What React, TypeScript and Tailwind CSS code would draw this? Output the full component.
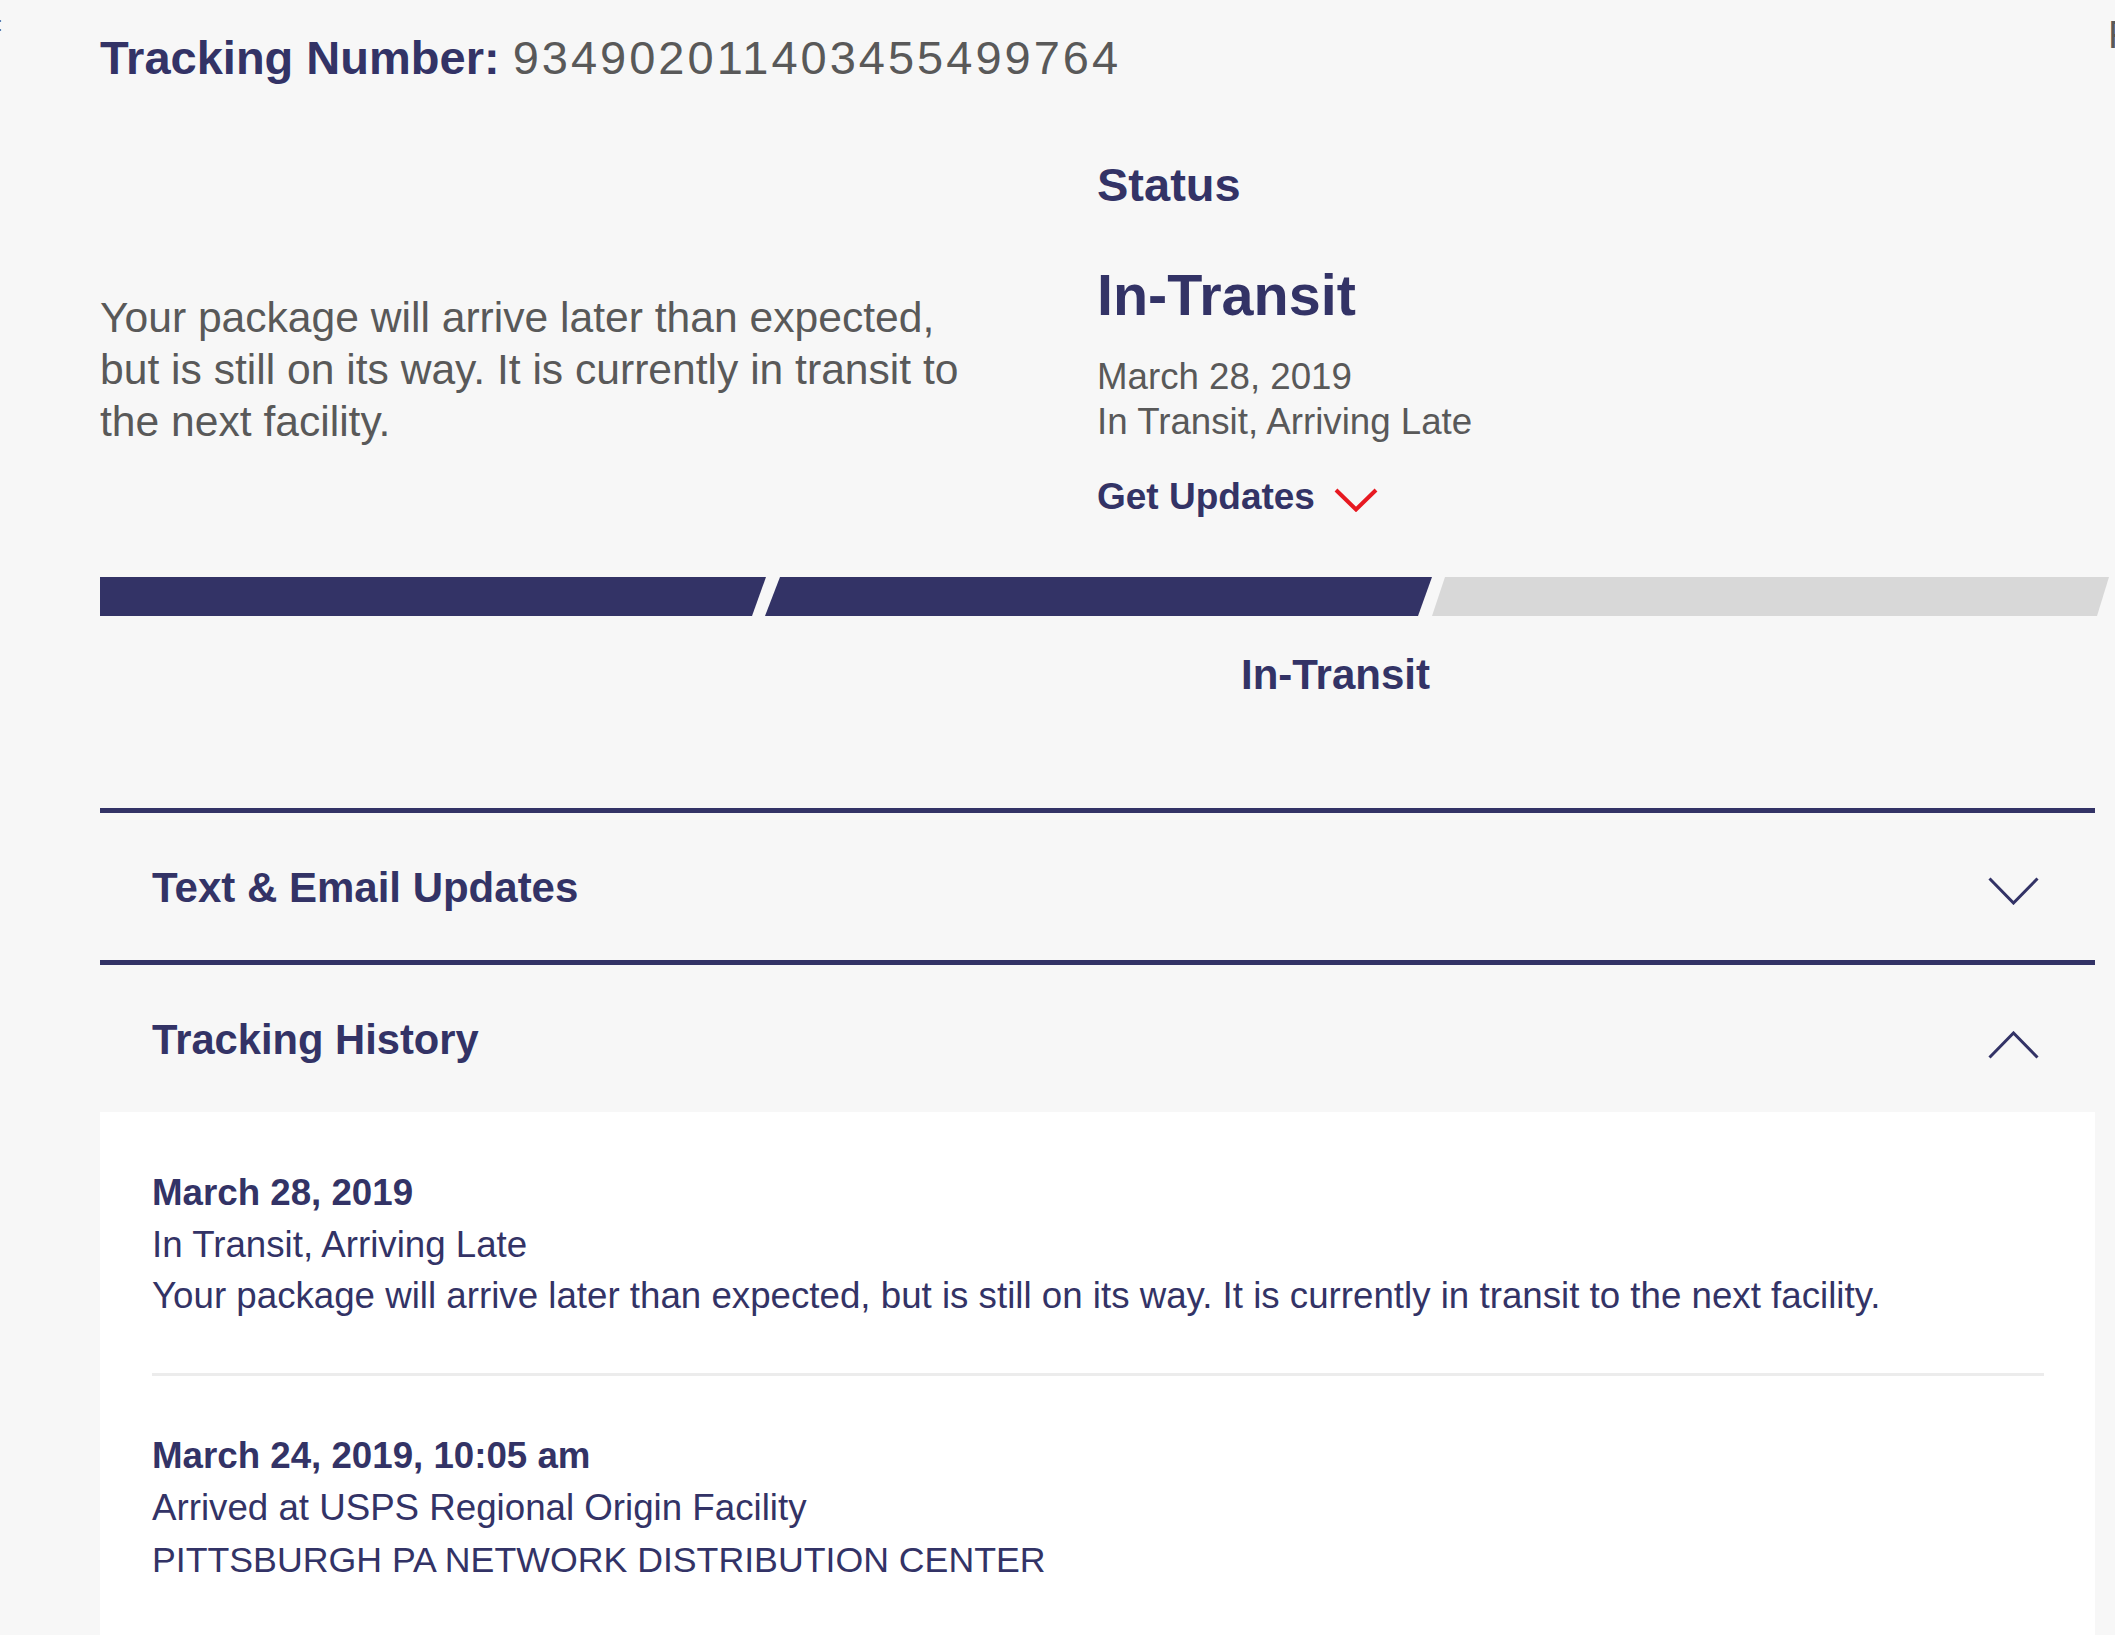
import React from "react";

function ChevronDown() {
  return (
    <svg width="51" height="28" viewBox="0 0 51 28" fill="none" className="mt-[9px] shrink-0">
      <polyline points="1.5,1.5 25.5,26 49.5,1.5" stroke="#333366" strokeWidth="3" strokeLinejoin="miter" />
    </svg>
  );
}

function ChevronUp() {
  return (
    <svg width="51" height="28" viewBox="0 0 51 28" fill="none" className="mt-[13px] shrink-0">
      <polyline points="1.5,26.5 25.5,2 49.5,26.5" stroke="#333366" strokeWidth="3" strokeLinejoin="miter" />
    </svg>
  );
}

export default function App() {
  return (
    <div className="relative min-h-[1635px] w-[2115px] overflow-hidden bg-[#f7f7f7] font-['Liberation_Sans',Arial,sans-serif]">
      <span className="absolute left-[-3px] top-[12px] text-[20px] leading-[24px] text-[#595959]">:</span>
      <span className="absolute left-[2108px] top-[13px] text-[39px] leading-[44px] text-[#595959]">F</span>

      <div className="pl-[100px]">
        <h1 className="pt-[30px] text-[47px] leading-[56px]">
          <span className="font-bold text-[#333366]">Tracking Number:</span>{" "}
          <span className="tracking-[3px] text-[#595959]">934902011403455499764</span>
        </h1>

        <div className="mt-[71px] flex items-start">
          <div className="w-[997px] shrink-0">
            <p className="mt-[134px] w-[880px] text-[42.6px] leading-[52px] text-[#595959]">
              Your package will arrive later than expected, but is still on its way. It is currently in transit to the next facility.
            </p>
          </div>
          <div className="flex flex-col">
            <p className="text-[47px] font-bold leading-[56px] text-[#333366]">Status</p>
            <p className="mt-[50px] text-[57.5px] font-bold leading-[64px] text-[#333366]">In-Transit</p>
            <div className="mt-[27px] text-[36.7px] leading-[45px] text-[#595959]">
              <p>March 28, 2019</p>
              <p>In Transit, Arriving Late</p>
            </div>
            <div className="mt-[30px] flex items-start">
              <span className="text-[37px] font-bold leading-[45px] text-[#333366]">Get Updates</span>
              <svg width="44" height="24" viewBox="0 0 44 24" fill="none" className="ml-[19px] mt-[14px]">
                <polyline points="2,2 22,21.5 42,2" stroke="#e71921" strokeWidth="4" />
              </svg>
            </div>
          </div>
        </div>

        <div className="mt-[58px] flex h-[39px]">
          <div className="h-full w-[666px] shrink-0 bg-[#333366] [clip-path:polygon(0_0,100%_0,calc(100%_-_14px)_100%,0_100%)]" />
          <div className="-ml-[1px] h-full w-[667px] shrink-0 bg-[#333366] [clip-path:polygon(15px_0,100%_0,calc(100%_-_14px)_100%,0_100%)]" />
          <div className="h-full w-[677px] shrink-0 bg-[#d8d8d8] [clip-path:polygon(13px_0,100%_0,calc(100%_-_12px)_100%,0_100%)]" />
        </div>

        <div className="mt-[35px] w-[1330px] text-right text-[42px] font-bold leading-[48px] text-[#333366]">
          In-Transit
        </div>

        <div className="mt-[109px] w-[1995px]">
          <div className="h-[5px] bg-[#333366]" />
          <div className="flex h-[147px] items-center justify-between pl-[52px] pr-[56px]">
            <span className="pt-[2px] text-[42px] font-bold leading-[48px] text-[#333366]">Text &amp; Email Updates</span>
            <ChevronDown />
          </div>
          <div className="h-[5px] bg-[#333366]" />
          <div className="flex h-[147px] items-center justify-between pl-[52px] pr-[56px]">
            <span className="pt-[2px] text-[41.7px] font-bold leading-[48px] text-[#333366]">Tracking History</span>
            <ChevronUp />
          </div>

          <div className="bg-white pb-[120px] pl-[52px] pr-[51px] pt-[55px] text-[36.7px] text-[#333366]">
            <div className="leading-[51.5px]">
              <p className="font-bold">March 28, 2019</p>
              <p>In Transit, Arriving Late</p>
              <p>Your package will arrive later than expected, but is still on its way. It is currently in transit to the next facility.</p>
            </div>
            <div className="mt-[51px] h-[3px] bg-[#ececec]" />
            <div className="mt-[54px] leading-[52px]">
              <p className="font-bold">March 24, 2019, 10:05 am</p>
              <p>Arrived at USPS Regional Origin Facility</p>
              <p className="text-[35.7px]">PITTSBURGH PA NETWORK DISTRIBUTION CENTER</p>
            </div>
          </div>
        </div>
      </div>
    </div>
  );
}
